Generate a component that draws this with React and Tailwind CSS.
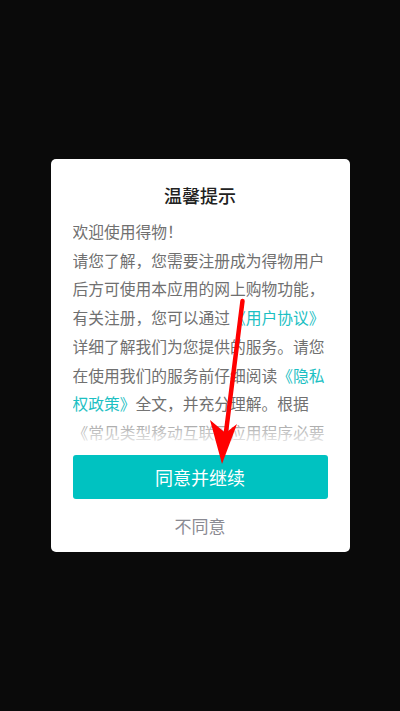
import React from "react";

export default function App() {
  return (
    <div
      className="relative min-h-[711px] w-full bg-[#0a0a0a] flex items-center justify-center"
      style={{ fontFamily: '"Noto Sans CJK SC", "Noto Sans", sans-serif' }}
    >
      <div className="w-[299px] bg-white rounded-[5px] px-[22px] pt-[24px]">
        <h2 className="text-center text-[18px] leading-[24px] font-medium text-[#222]">
          温馨提示
        </h2>

        <div className="relative mt-[11px] h-[229px] overflow-hidden">
          <p className="text-[15.75px] leading-[28.7px] text-[#707070]">
            欢迎使用得物！
            <br />
            请您了解，您需要注册成为得物用户后方可使用本应用的网上购物功能，有关注册，您可以通过
            <span className="text-[#1cc0c3]">《用户协议》</span>
            详细了解我们为您提供的服务。请您在使用我们的服务前仔细阅读
            <span className="text-[#1cc0c3]">《隐私权政策》</span>
            全文，并充分理解。根据《常见类型移动互联网应用程序必要个人信息范围规定》，我们会在您同意后收集必要的个人信息。
          </p>
          <div className="absolute bottom-0 left-0 right-0 h-[38px] bg-linear-to-b from-white/0 to-white/95" />
        </div>

        <button className="mt-[8px] w-full h-[44px] bg-[#00c2c1] rounded-[3px] text-white text-[18px]">
          同意并继续
        </button>
        <div className="h-[53px] flex items-center justify-center text-[17px] text-[#8a8a92]">
          不同意
        </div>
      </div>

      <svg
        className="absolute inset-0 pointer-events-none"
        width="400"
        height="711"
        viewBox="0 0 400 711"
      >
        <line
          x1="242.5"
          y1="301"
          x2="225.5"
          y2="436"
          stroke="#ff0000"
          strokeWidth="4.5"
          strokeLinecap="round"
        />
        <polygon points="222,464 210,420 225.5,433 237,424" fill="#ff0000" />
      </svg>
    </div>
  );
}
